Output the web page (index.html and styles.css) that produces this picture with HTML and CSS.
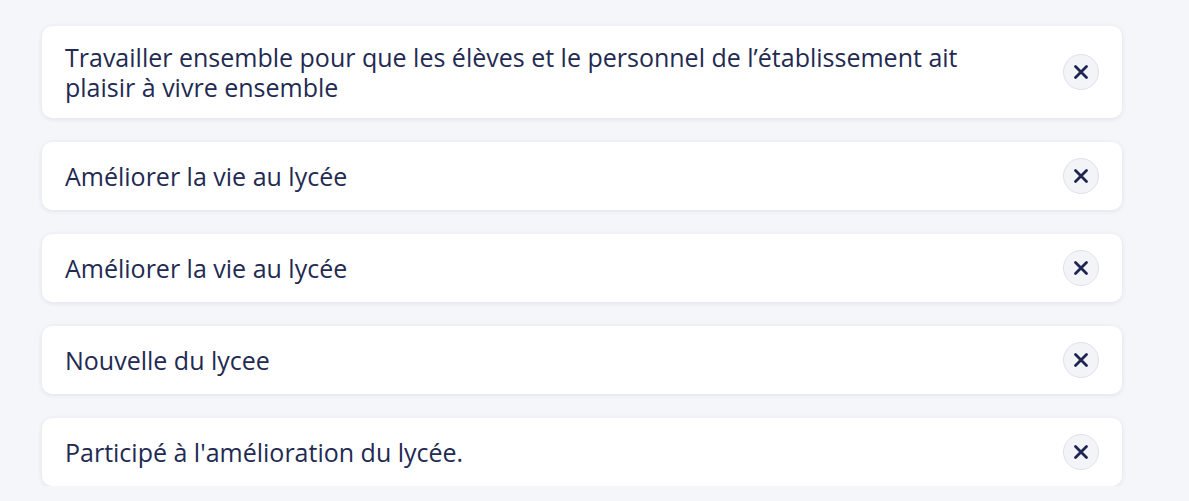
FILE: index.html
```html
<!DOCTYPE html>
<html lang="fr">
<head>
<meta charset="utf-8">
<link rel="stylesheet" href="styles.css">
</head>
<body>
<ul class="list">
  <li class="card"><span class="label">Travailler ensemble pour que les élèves et le personnel de l’établissement ait plaisir à vivre ensemble</span><button class="close" aria-label="Supprimer"><svg viewBox="0 0 16 16" width="16" height="16"><path d="M2.5 2.5 L13.5 13.5 M13.5 2.5 L2.5 13.5" stroke="#1f2552" stroke-width="2.8" stroke-linecap="round" fill="none"/></svg></button></li>
  <li class="card"><span class="label">Améliorer la vie au lycée</span><button class="close" aria-label="Supprimer"><svg viewBox="0 0 16 16" width="16" height="16"><path d="M2.5 2.5 L13.5 13.5 M13.5 2.5 L2.5 13.5" stroke="#1f2552" stroke-width="2.8" stroke-linecap="round" fill="none"/></svg></button></li>
  <li class="card"><span class="label">Améliorer la vie au lycée</span><button class="close" aria-label="Supprimer"><svg viewBox="0 0 16 16" width="16" height="16"><path d="M2.5 2.5 L13.5 13.5 M13.5 2.5 L2.5 13.5" stroke="#1f2552" stroke-width="2.8" stroke-linecap="round" fill="none"/></svg></button></li>
  <li class="card"><span class="label">Nouvelle du lycee</span><button class="close" aria-label="Supprimer"><svg viewBox="0 0 16 16" width="16" height="16"><path d="M2.5 2.5 L13.5 13.5 M13.5 2.5 L2.5 13.5" stroke="#1f2552" stroke-width="2.8" stroke-linecap="round" fill="none"/></svg></button></li>
  <li class="card"><span class="label">Participé à l'amélioration du lycée.</span><button class="close" aria-label="Supprimer"><svg viewBox="0 0 16 16" width="16" height="16"><path d="M2.5 2.5 L13.5 13.5 M13.5 2.5 L2.5 13.5" stroke="#1f2552" stroke-width="2.8" stroke-linecap="round" fill="none"/></svg></button></li>
</ul>
</body>
</html>
```
FILE: styles.css
```css
html, body {
  margin: 0;
  padding: 0;
  background: #f5f6fa;
}
body {
  font-family: "Open Sans", "Noto Sans", sans-serif;
  color: #232a52;
}
.list {
  list-style: none;
  margin: 0;
  padding: 26px 0 0 42px;
  width: 1080px;
  display: flex;
  flex-direction: column;
  gap: 24px;
}
.card {
  background: #ffffff;
  border-radius: 10px;
  box-shadow: 0 1px 5px rgba(30, 40, 80, 0.10);
  padding: 16px 23px 16px 23px;
  display: flex;
  align-items: center;
  justify-content: space-between;
  gap: 40px;
}
.label {
  font-size: 25px;
  line-height: 30px;
  max-width: 950px;
}
.close {
  flex: none;
  width: 36px;
  height: 36px;
  border-radius: 50%;
  background: #f3f4f8;
  border: 1px solid #dfe1e8;
  display: flex;
  align-items: center;
  justify-content: center;
  padding: 0;
}
.close svg {
  display: block;
}
```
